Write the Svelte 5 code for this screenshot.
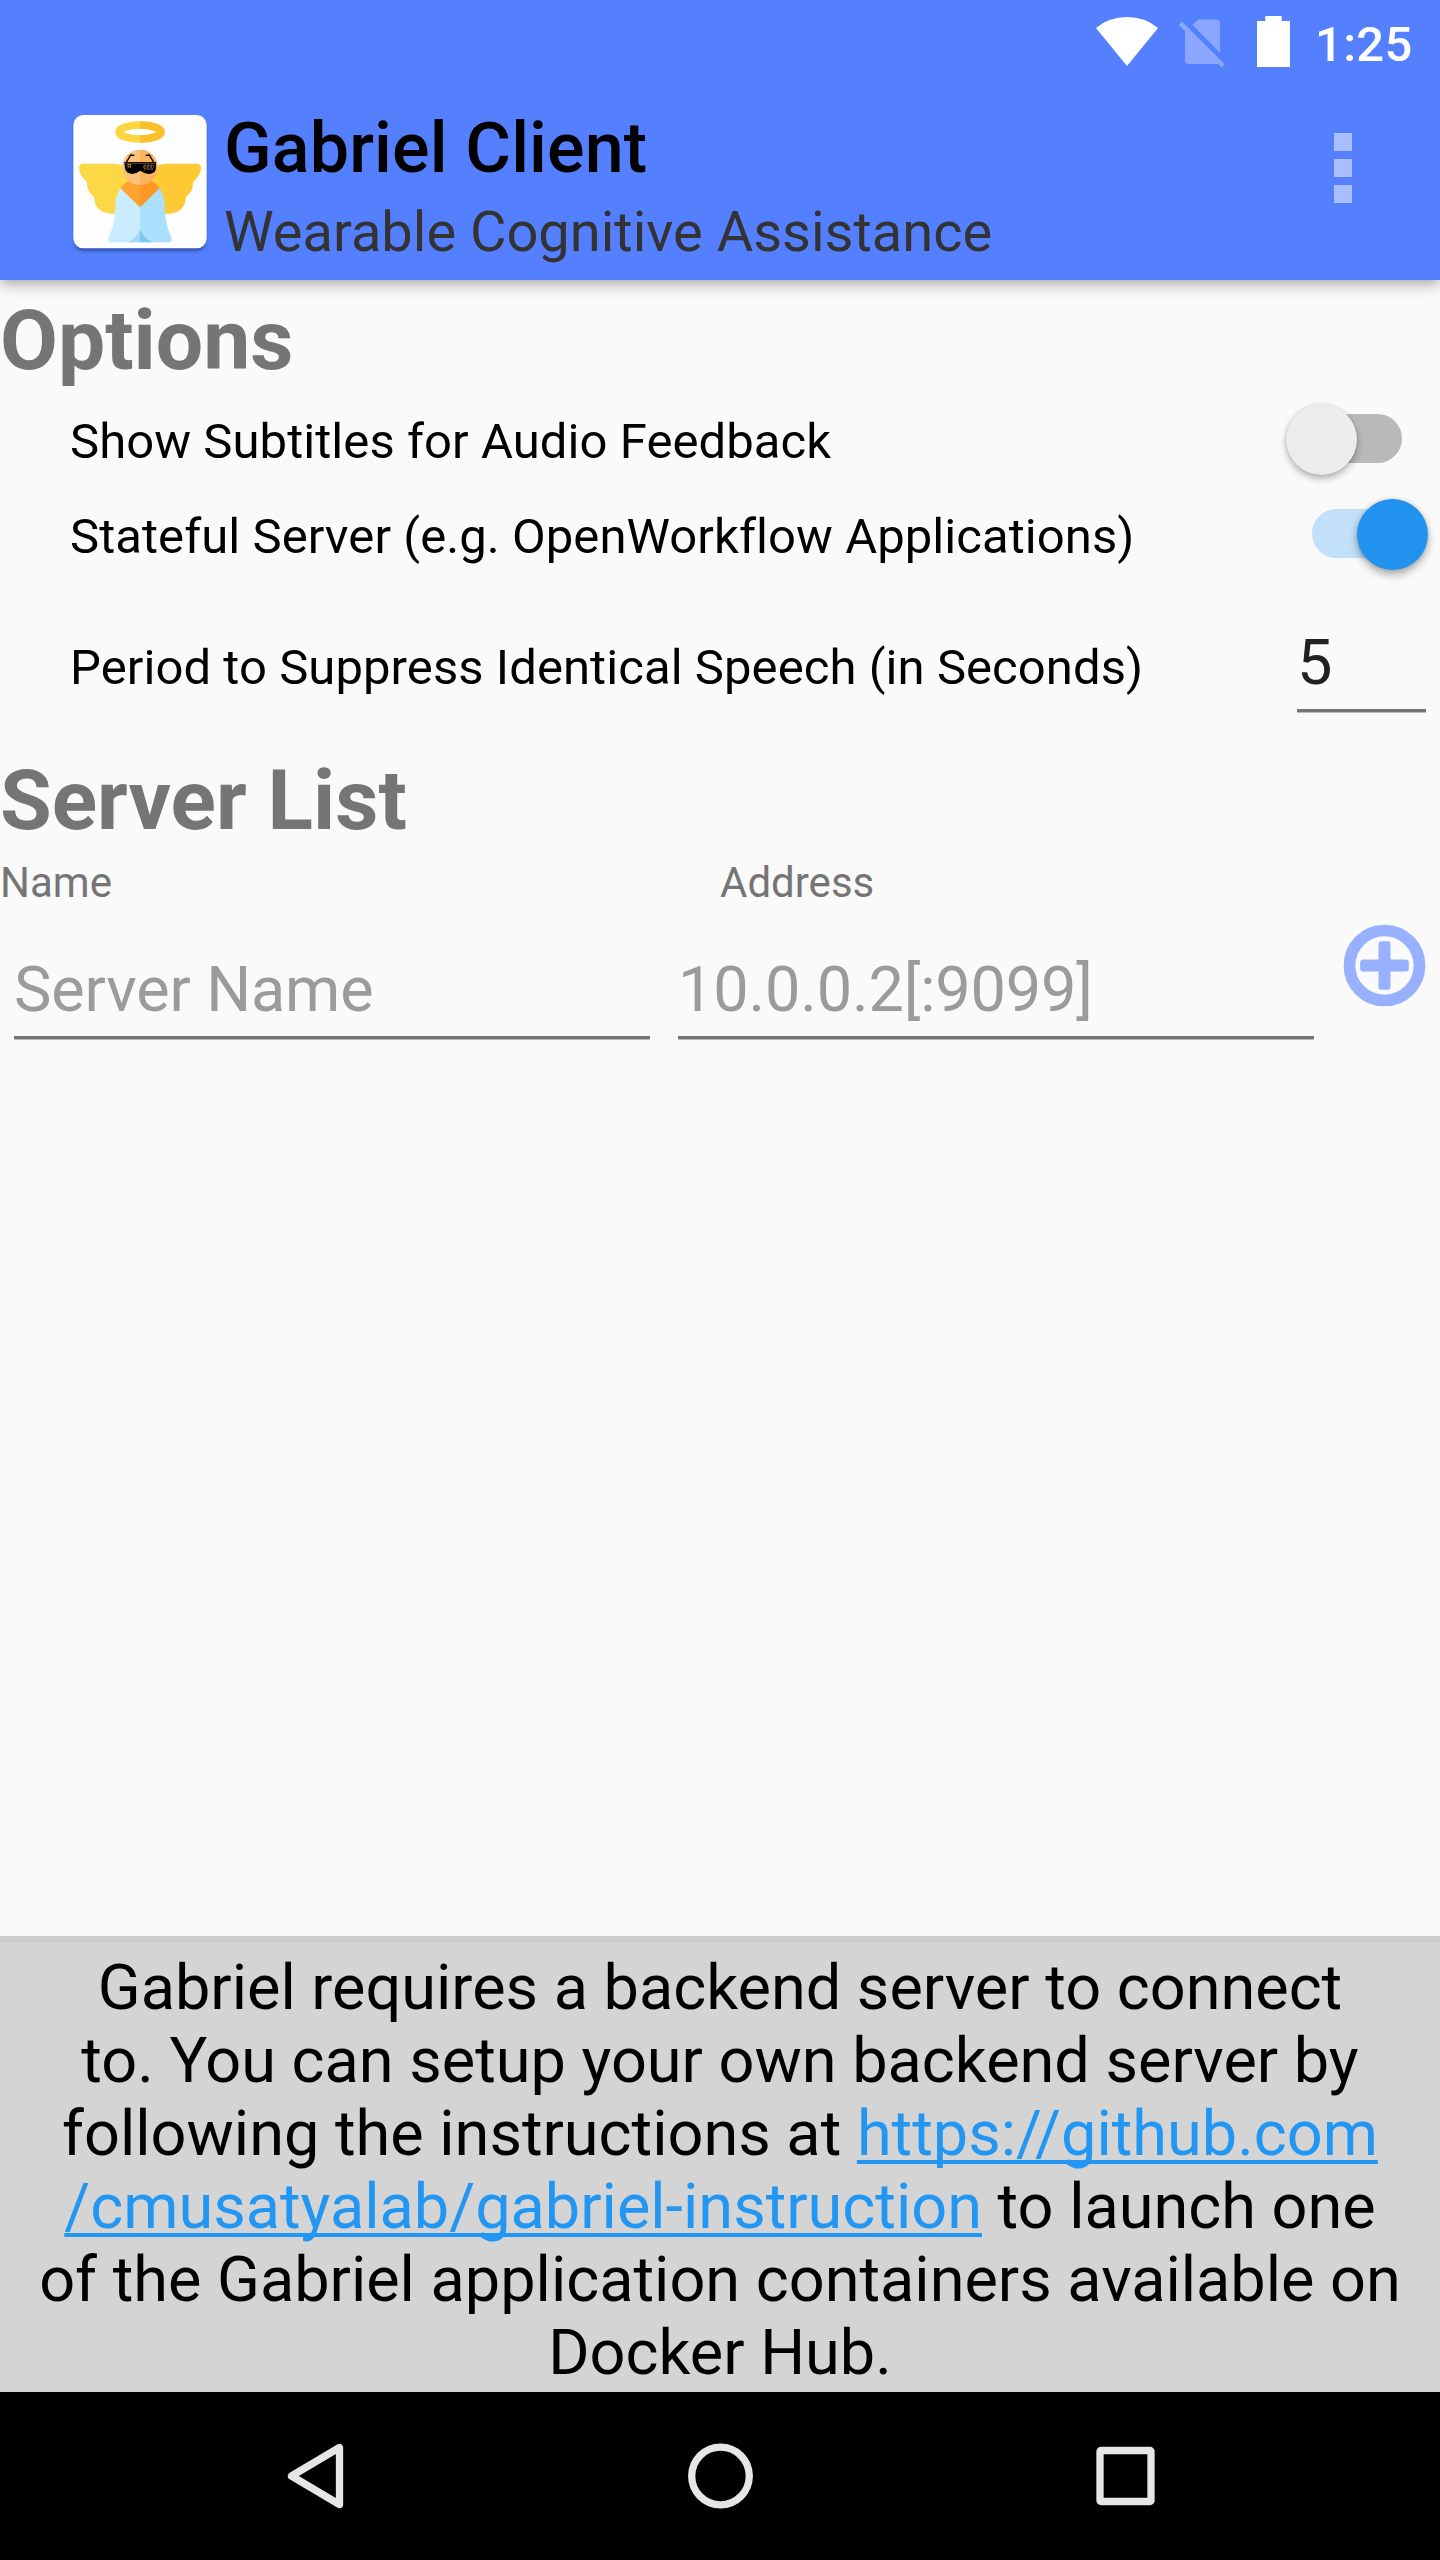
<script>
  let subtitles = $state(false);
  let stateful = $state(true);
</script>

<div class="screen">
  <header>
    <div class="status">
      <svg class="wifi" viewBox="0 0 62 49"><path d="M0 11 Q13 0 31 0 Q49 0 62 11 L31 49Z" fill="#fff" /></svg>
      <svg class="sim" viewBox="0 0 46 49" fill="#8aa6ff">
        <path d="M13.500 6 L19 .5 H37 Q41 .5 41 4.500 V34Z" />
        <path d="M3 2.500 L46 45.500 L42.500 48.500 L38.500 44.500 Q38 45 37 45 H10 Q6 45 6 41 V12 L0 6Z" />
      </svg>
      <svg class="battery" viewBox="0 0 33 51"><path d="M8.300 0 H24.700 V5 H33 V51 H0 V5 H8.300Z" fill="#fff" /></svg>
      <span class="time">1:25</span>
    </div>
    <div class="bar">
      <svg class="logo" viewBox="30 36 420 430">
        <defs>
          <filter id="soft" x="-10%" y="-10%" width="120%" height="125%"><feGaussianBlur stdDeviation="5" /></filter>
          <clipPath id="rightHalf"><rect x="240" y="0" width="240" height="510" /></clipPath>
        </defs>
        <rect x="42" y="56" width="396" height="398" rx="30" fill="#18307a" opacity=".55" filter="url(#soft)" />
        <rect x="40" y="45" width="400" height="400" rx="30" fill="#fdfdfd" />
        <ellipse cx="240" cy="96" rx="63" ry="21" fill="none" stroke="#fcd73f" stroke-width="23" />
        <ellipse cx="240" cy="96" rx="63" ry="21" fill="none" stroke="#fbbf2b" stroke-width="23" clip-path="url(#rightHalf)" />
        <path d="M67 191 H160 Q180 191 205 205 L215 250 L165 341 H151 Q104 336 102 290 Q82 277 80 245 Q59 228 57 205 Q57 192 67 191Z" fill="#fcd944" />
        <path d="M413 191 H320 Q300 191 275 205 L265 250 L315 341 H329 Q376 336 378 290 Q398 277 400 245 Q421 228 423 205 Q423 192 413 191Z" fill="#fdc934" />
        <path d="M181 265 Q191 250 210 240 H240 V345Z" fill="#fea52f" />
        <path d="M299 265 Q289 250 270 240 H240 V345Z" fill="#fe9824" />
        <path d="M181 265 L240 322 V427 H154 Q142 427 145 414 Q163 375 165 335 Q164 290 181 265Z" fill="#c9edfe" />
        <path d="M299 265 L240 322 V427 H326 Q338 427 335 414 Q317 375 315 335 Q316 290 299 265Z" fill="#aae0fb" />
        <path d="M240 390 Q228 416 202 427 H240Z" fill="#a4d8f4" />
        <path d="M240 390 Q252 416 278 427 H240Z" fill="#7fc5ed" />
        <circle cx="240" cy="202" r="53" fill="#fdc078" />
        <circle cx="240" cy="202" r="53" fill="#fdb35c" clip-path="url(#rightHalf)" />
        <path d="M199 187 L212 165 L223 166 M281 187 L268 165 L257 166" fill="none" stroke="#000" stroke-width="4" />
        <path d="M193 186 H288 V205 Q286 222 266 222 Q253 221 241 212 Q229 221 216 222 Q197 220 195 205Z" fill="#000" />
        <path d="M196 190 H286" stroke="#9b6b38" stroke-width="2" />
        <path d="M251 196 H282 M249 201 H282 M252 207 H281" stroke="#dc9a4b" stroke-width="2.500" stroke-dasharray="7 3" />
        <rect x="204" y="194" width="8" height="7" fill="none" stroke="#dc9a4b" stroke-width="2.500" />
      </svg>
      <div class="titles">
        <h1>Gabriel Client</h1>
        <p>Wearable Cognitive Assistance</p>
      </div>
      <button class="more" aria-label="More options"><i></i><i></i><i></i></button>
    </div>
  </header>

  <main>
    <h2>Options</h2>
    <div class="row">
      <span class="label">Show Subtitles for Audio Feedback</span>
      <button class="switch" class:on={subtitles} aria-label="Show subtitles" onclick={() => (subtitles = !subtitles)}><i></i></button>
    </div>
    <div class="row">
      <span class="label">Stateful Server (e.g. OpenWorkflow Applications)</span>
      <button class="switch" class:on={stateful} aria-label="Stateful server" onclick={() => (stateful = !stateful)}><i></i></button>
    </div>
    <div class="row period">
      <span class="label">Period to Suppress Identical Speech (in Seconds)</span>
      <div class="field seconds">5</div>
    </div>

    <h2 class="servers">Server List</h2>
    <div class="columns"><span>Name</span><span>Address</span></div>
    <div class="entry">
      <div class="field hint">Server Name</div>
      <div class="field hint">10.0.0.2[:9099]</div>
      <svg class="add" viewBox="-41.500 -41.500 83 83">
        <circle r="35" fill="none" stroke="#97b0ff" stroke-width="11.700" />
        <rect x="-24.300" y="-6" width="48.600" height="12" rx="3" fill="#97b0ff" />
        <rect x="-6" y="-24.300" width="12" height="48.600" rx="3" fill="#97b0ff" />
      </svg>
    </div>
  </main>

  <footer>
    Gabriel requires a backend server to connect<br />
    to. You can setup your own backend server by<br />
    following the instructions at <span class="link">https://github.com<br />/cmusatyalab/gabriel-instruction</span> to launch one<br />
    of the Gabriel application containers available on<br />
    Docker Hub.
  </footer>

  <nav>
    <svg viewBox="0 0 68 68"><path d="M58.500 5.500 V62.500 L10.500 34Z" /></svg>
    <svg viewBox="0 0 68 68"><circle cx="34.500" cy="34" r="28.800" /></svg>
    <svg viewBox="0 0 68 68"><rect x="9" y="8.500" width="51" height="51" rx="1" /></svg>
  </nav>
</div>

<style>
  :global(body) {
    margin: 0;
  }
  .screen {
    width: 1440px;
    height: 2560px;
    display: flex;
    flex-direction: column;
    background: #fafafa;
    font-family: Roboto, sans-serif;
    color: #000;
    overflow: hidden;
    white-space: nowrap;
  }
  h1, h2, p {
    margin: 0;
  }
  button {
    border: 0;
    padding: 0;
    background: none;
  }
  svg {
    display: block;
    flex: none;
  }
  header {
    position: relative;
    z-index: 1;
    height: 280px;
    flex: none;
    background: #547fff;
    box-shadow: 0 3px 14px rgba(0, 0, 0, 0.38);
  }
  .status {
    height: 84px;
    box-sizing: border-box;
    padding: 0 29px 0 0;
    display: flex;
    justify-content: flex-end;
    align-items: flex-start;
  }
  .wifi {
    width: 62px;
    height: 49px;
    margin: 17px 21px 0 0;
  }
  .sim {
    width: 46px;
    height: 49px;
    margin: 19px 32px 0 0;
  }
  .battery {
    width: 33px;
    height: 51px;
    margin: 16px 25px 0 0;
  }
  .time {
    width: 96px;
    font-size: 49px;
    font-weight: 500;
    line-height: 89px;
    letter-spacing: 0.3px;
    color: #fff;
  }
  .bar {
    display: flex;
    align-items: flex-start;
    padding-left: 70px;
  }
  .logo {
    width: 140px;
    height: 143.330px;
    margin-top: 28px;
  }
  .titles {
    margin: 18px 0 0 14px;
    flex: 1;
  }
  h1 {
    font-size: 70px;
    font-weight: 500;
    line-height: 92px;
    letter-spacing: 0.15px;
  }
  .titles p {
    font-size: 56px;
    line-height: 76px;
    color: #333;
  }
  .more {
    display: flex;
    flex-direction: column;
    gap: 8px;
    margin: 49px 88px 0 0;
  }
  .more i {
    width: 18px;
    height: 18px;
    background: #a9beff;
  }
  main {
    flex: 1;
    padding-top: 12px;
  }
  h2 {
    height: 100px;
    font-size: 84px;
    font-weight: 700;
    line-height: 98px;
    color: #757575;
  }
  .row {
    height: 95px;
    display: flex;
    justify-content: space-between;
    align-items: center;
    padding: 0 12px 0 70px;
  }
  .label {
    font-size: 49px;
    line-height: 58px;
    letter-spacing: 0.07px;
    padding-top: 4px;
    font-variant-ligatures: common-ligatures;
  }
  .switch {
    width: 142px;
    height: 71px;
    display: flex;
    align-items: center;
  }
  .switch::before {
    content: '';
    width: 90px;
    height: 49px;
    margin: 0 -116px 2px 26px;
    border-radius: 25px;
    background: #b9b9b9;
    flex: none;
  }
  .switch i {
    width: 71px;
    height: 71px;
    position: relative;
    border-radius: 50%;
    background: #ececec;
    box-shadow: 0 4px 7px rgba(0, 0, 0, 0.28), 0 0 3px rgba(0, 0, 0, 0.12);
  }
  .switch.on::before {
    background: #c2e0f9;
  }
  .switch.on i {
    margin-left: 71px;
    background: #2193ef;
    box-shadow: 0 5px 8px rgba(0, 0, 0, 0.3), 0 0 4px rgba(0, 0, 0, 0.15);
  }
  .period {
    height: 131px;
    padding-right: 14px;
  }
  .period .label {
    padding-top: 40px;
  }
  .field {
    box-sizing: border-box;
    width: 636px;
    font-size: 63px;
    line-height: 93px;
    border-bottom: 3px solid #757575;
    box-shadow: 0 1px #bababa;
  }
  .seconds {
    width: 129px;
    height: 97px;
    line-height: 96px;
    align-self: flex-end;
    margin-bottom: 1px;
    color: #212121;
  }
  .hint {
    color: #9b9b9b;
    letter-spacing: -0.15px;
  }
  .servers {
    margin-top: 39px;
    height: 98px;
  }
  .columns {
    display: grid;
    grid-template-columns: 1fr 1fr;
    font-size: 42px;
    line-height: 66px;
    color: #757575;
  }
  .entry {
    display: flex;
    gap: 28px;
    padding: 27px 0 0 14px;
  }
  .add {
    width: 83px;
    height: 83px;
    margin: -19px 0 0 1px;
  }
  footer {
    height: 456px;
    box-sizing: border-box;
    border-top: 7px solid #ccc;
    padding-top: 8px;
    background: #d4d4d4;
    font-size: 63px;
    line-height: 73px;
    text-align: center;
  }
  .link {
    color: #2196f3;
    text-decoration: underline;
    text-decoration-thickness: 4px;
    text-underline-offset: 5px;
    text-decoration-skip-ink: none;
  }
  nav {
    height: 168px;
    display: flex;
    justify-content: center;
    align-items: center;
    gap: 337px;
    background: #000;
  }
  nav svg {
    width: 68px;
    height: 68px;
    fill: none;
    stroke: #e6e6e6;
    stroke-width: 7.300px;
    stroke-linejoin: round;
  }
</style>
